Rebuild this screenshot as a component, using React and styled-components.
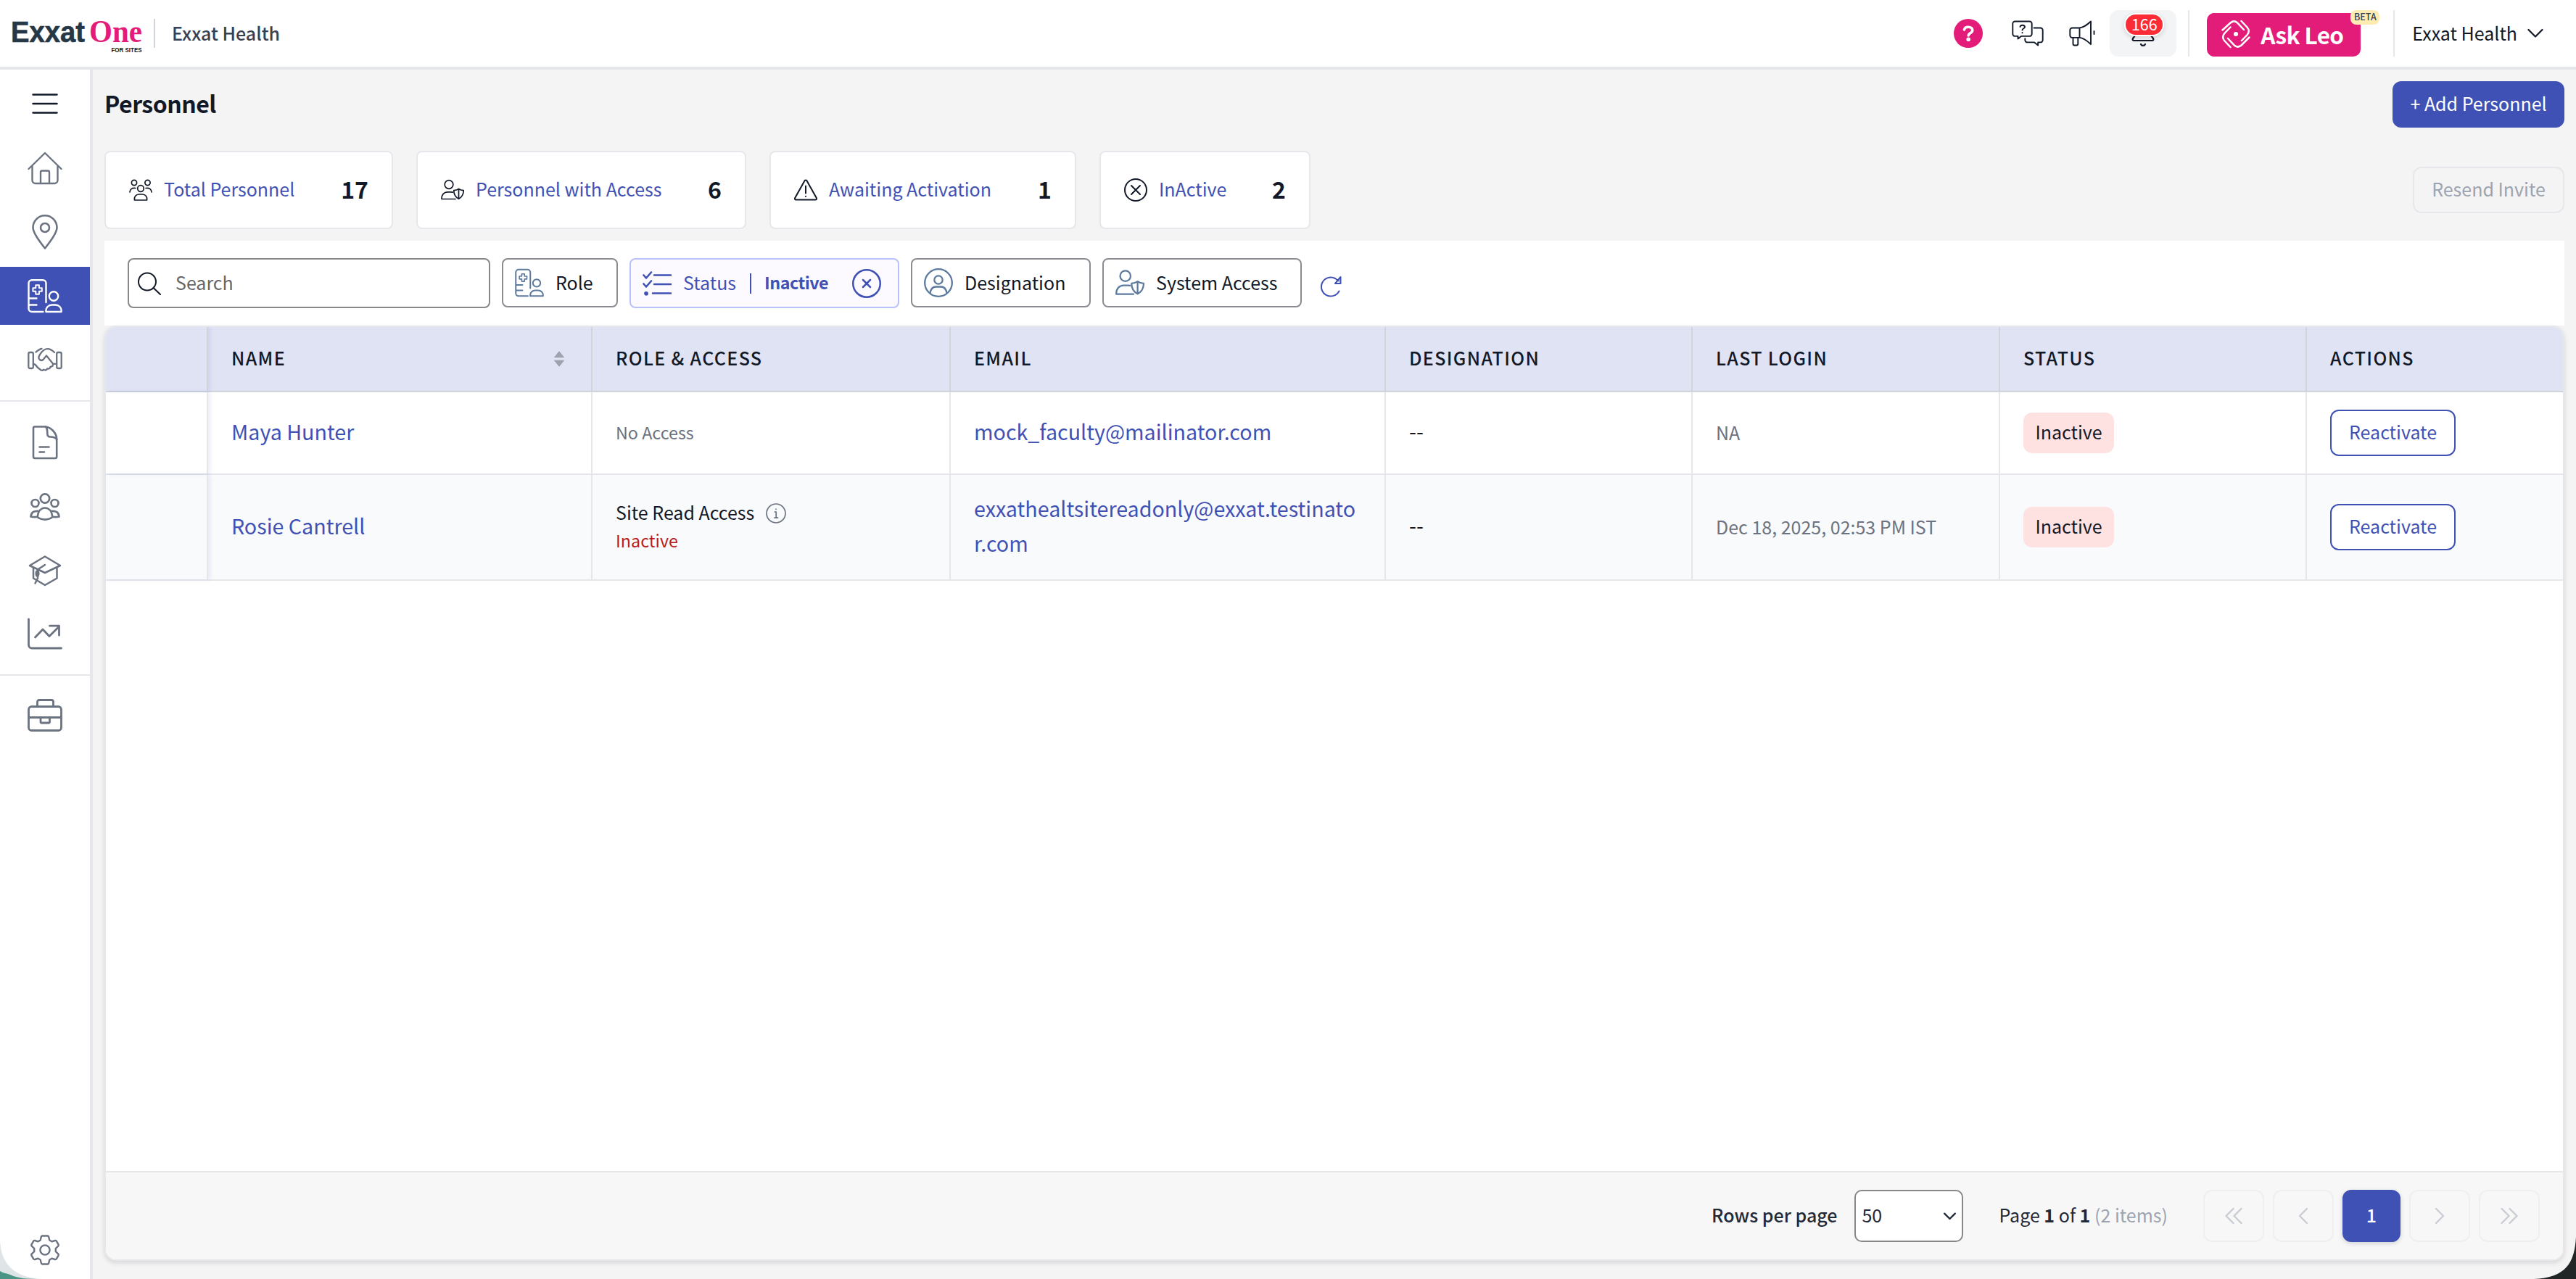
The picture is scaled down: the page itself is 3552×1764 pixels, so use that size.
import React from "react";
import styled, { createGlobalStyle } from "styled-components";

const GlobalStyle = createGlobalStyle`
  * {
    box-sizing: border-box;
  }

  body {
    margin: 0;
    font-family: "Noto Sans CJK JP", "Noto Sans", sans-serif;
    font-size: 25px;
    line-height: 1.4;
    color: #111827;
  }

  button {
    font: inherit;
    padding: 0;
    cursor: pointer;
  }

  svg {
    display: block;
    flex: none;
  }
`;

/* ---------- icons ---------- */

const Icon = ({ w, h, sw = 2.5, children, ...rest }) => (
  <svg
    width={w}
    height={h}
    viewBox={`0 0 ${w} ${h}`}
    fill="none"
    stroke="currentColor"
    strokeWidth={sw}
    strokeLinecap="round"
    strokeLinejoin="round"
    {...rest}
  >
    {children}
  </svg>
);

const MenuIcon = () => (
  <Icon w={36} h={30}>
    <path d="M1.5 2.5h33M1.5 15h33M1.5 27.500h33" />
  </Icon>
);

const HomeIcon = () => (
  <Icon w={48} h={48} sw={2.4}>
    <path d="M1.500 25L24 3l22.500 22M6.500 21v19.500a4.500 4.500 0 0 0 4.500 4.500h26a4.500 4.500 0 0 0 4.500-4.500V21M18 45V29.500a2 2 0 0 1 2-2h8a2 2 0 0 1 2 2V45" />
  </Icon>
);

const PinIcon = () => (
  <Icon w={48} h={48} sw={2.6}>
    <path d="M24 46.500C20 41 7.500 27 7.500 17.800a16.500 16.500 0 0 1 33 0C40.500 27 28 41 24 46.500z" />
    <circle cx="24" cy="18" r="6" />
  </Icon>
);

const StaffIcon = ({ size = 48, sw = 2.4 }) => (
  <Icon w={48} h={48} sw={sw} width={size} height={size}>
    <path d="M25.500 33V6.500A4.500 4.500 0 0 0 21 2.200H6A4.500 4.500 0 0 0 1.500 6.500v35A4.500 4.500 0 0 0 6 46h15.500M2 27.500h10.500M2 36.500h10.500" />
    <path
      strokeWidth="2"
      d="M11.300 9.300h4.600v3.900h3.900v4.600h-3.900v3.900h-4.600v-3.900H7.400v-4.600h3.900z"
    />
    <circle cx="36" cy="24.500" r="6.200" />
    <path d="M25.500 46c-1-6 4-9.500 8-9.500h5c4 0 9 3.500 8 9.500z" />
  </Icon>
);

const HandshakeIcon = () => (
  <Icon w={48} h={36} sw={2.3}>
    <rect x="1.300" y="8" width="6.500" height="22" rx="2" />
    <rect x="40.200" y="8" width="6.500" height="22" rx="2" />
    <path d="M8 24c3 0 4 2.500 6 5l3 2.200c1.800 2.200 4 2.300 5.200.4 2.300 1.600 4.300 1 5-1.200 2.600.6 4-.4 4.200-2.600 2.600 0 4-1.700 3.600-4H40M11.500 7.500c2.500-2 5-4.300 8-4.500M37 8c-4-4-8.500-5.500-12-4.500-3.500.8-8 6.500-9.500 10.500-.8 3.500 2.800 6.500 6 4l4.500-5.500L34.500 23" />
  </Icon>
);

const DocIcon = () => (
  <Icon w={48} h={48} sw={2.6}>
    <path d="M8 4.500A2 2 0 0 1 10 2.500h14.500C32 3 40 11 40.200 19.500V44a2 2 0 0 1-2 2H10a2 2 0 0 1-2-2z" />
    <path d="M24.500 2.500c2.500 1.500 2.800 4 2.800 9.500 0 3 1.200 4.500 4 4.500 4 0 7 .5 8.900 3.500M16.500 30.500h13M16.500 37.500h6.500" />
  </Icon>
);

const PeopleIcon = () => (
  <Icon w={48} h={48} sw={2.7}>
    <circle cx="24" cy="13.500" r="6.200" />
    <circle cx="10.500" cy="20" r="5" />
    <circle cx="37.500" cy="20" r="5" />
    <path d="M13.500 39c1-7.500 4.800-12.500 10.500-12.500s9.500 5 10.500 12.500c-6 4.700-15 4.700-21 0zM15.500 31c-6.500-.8-10.500 1.500-11 7.500 3 .8 6 1 9 .3M32.500 31c6.500-.8 10.500 1.500 11 7.500-3 .8-6 1-9 .3" />
  </Icon>
);

const GradIcon = () => (
  <Icon w={48} h={48} sw={2.5}>
    <path d="M24 5.500L45 18 24 28 3 18zM24 17l-10 6.500v12l-3.500 7M8 21.500v14L24 45l16.500-9.500V21" />
    <ellipse cx="13.500" cy="29" rx="1.800" ry="3.500" fill="currentColor" />
  </Icon>
);

const ChartIcon = () => (
  <Icon w={48} h={48} sw={2.8}>
    <path d="M1.500 4v35.500a4.500 4.500 0 0 0 4.500 4.500h40.500M10.500 29L21 18l9 9.500L43.500 14M30.500 13.200h13v13" />
  </Icon>
);

const BriefcaseIcon = () => (
  <Icon w={48} h={48} sw={2.8}>
    <rect x="1.500" y="10.500" width="45" height="33" rx="4" />
    <path d="M13.500 10.500V4A2.500 2.500 0 0 1 16 1.500h17A2.500 2.500 0 0 1 35.500 4v6.500M1.500 25.500h45M18 25.500v6a1.500 1.500 0 0 0 1.500 1.500h9.500a1.500 1.500 0 0 0 1.500-1.500v-6" />
  </Icon>
);

const GearIcon = () => (
  <Icon w={40} h={42} sw={2.4}>
    <path d="M16.500 1.500h7c1 0 1.500.5 1.700 1.400l1.100 4.600 3.200 1.800 4.200-1.300c1-.3 1.700 0 2.200.8l2.600 4.600c.4.800.3 1.500-.3 2.200l-3.400 3.200v4.400l3.400 3.200c.6.700.7 1.400.3 2.200l-2.600 4.600c-.5.800-1.200 1.100-2.200.8l-4.200-1.300-3.200 1.800-1.100 4.600c-.2.900-.7 1.400-1.700 1.400h-7c-1 0-1.500-.5-1.700-1.400l-1.100-4.600-3.200-1.800L6.300 34c-1 .3-1.700 0-2.200-.8l-2.600-4.600c-.4-.8-.3-1.500.3-2.200l3.400-3.200v-4.400l-3.400-3.200c-.6-.7-.7-1.400-.3-2.200l2.600-4.600c.5-.8 1.200-1.100 2.200-.8l4.200 1.300 3.200-1.800 1.100-4.600c.2-.9.700-1.400 1.700-1.400z" />
    <circle cx="20" cy="21" r="6.600" />
  </Icon>
);

const HelpIcon = () => (
  <Icon w={40} h={40} sw={3.6}>
    <circle cx="20" cy="20" r="20" fill="#e31c79" stroke="none" />
    <path d="M14.500 15c.5-3 2.800-3.800 5.500-3.800 3.500 0 5.800 1.800 5.800 4.600 0 4.200-5.600 3.700-5.600 7.200" stroke="#fff" />
    <circle cx="20.200" cy="28.300" r="1" stroke="#fff" fill="#fff" />
  </Icon>
);

const ChatIcon = () => (
  <Icon w={44} h={36} sw={1.9}>
    <path d="M4.500 1.500h20a3.200 3.200 0 0 1 3.200 3.200v14a3.200 3.200 0 0 1-3.200 3.200H13l-4.500 3.700v-3.700h-4a3.200 3.200 0 0 1-3.200-3.200v-14a3.200 3.200 0 0 1 3.200-3.200zM30.500 10.500h9a3.200 3.200 0 0 1 3.200 3.200v13.500a3.200 3.200 0 0 1-3.200 3.200h-3.300v4.100l-5-4.100H21.500a3.200 3.200 0 0 1-3.200-3.200v-2" />
    <path d="M11.500 9c0-3 6.500-3 6.500.3 0 2-3.500 2-3.500 4.200M14.500 17v.2" />
  </Icon>
);

const MegaphoneIcon = () => (
  <Icon w={36} h={36} sw={1.900}>
    <path d="M14.500 10.500H4.500a3.200 3.200 0 0 0-3.200 3.200v7a3.200 3.200 0 0 0 3.200 3.200h10c6 .5 10.500 4.500 15.500 9.100V1.500c-5 4.500-9.500 8.500-15.500 9zM14.500 10.500v13.400M5.500 24v8.500a2 2 0 0 0 2 2h2.800a2 2 0 0 0 2-2V24M34.500 15v4" />
  </Icon>
);

const BellIcon = () => (
  <Icon w={32} h={38} sw={2.2}>
    <path d="M16 2c-6 0-9.500 4.500-9.500 10v8L2 26c-1 1.800 0 3 1.500 3h25c1.500 0 2.500-1.200 1.500-3l-4.500-6v-8C25.500 6.500 22 2 16 2zM13 34c1 2.500 5 2.500 6 0" />
  </Icon>
);

const LeoIcon = () => (
  <Icon w={40} h={40} sw={2.500} stroke="#fff">
    <path d="M1.500 14.500L12.500 4.500c3.500-2.800 7-2.800 10 .4L31 14M27.500 2l8 8.500c3 3.500 3 7 .2 10.500L28 29M38.500 24.500L27.500 35.500c-3.500 2.800-7 2.800-10-.4L9 26M12.500 38l-8-8.500c-3-3.500-3-7-.2-10.500L12.500 10.500" />
    <circle cx="20" cy="20" r="1.800" fill="#fff" />
  </Icon>
);

const ChevronDown = ({ w = 22, h = 14, sw = 2.2 }) => (
  <Icon w={22} h={14} sw={sw} width={w} height={h}>
    <path d="M1.500 2L11 11.500 20.500 2" />
  </Icon>
);

const GroupIcon = () => (
  <Icon w={32} h={32} sw={1.700}>
    <circle cx="7" cy="6" r="3.600" />
    <circle cx="25.500" cy="6" r="3.600" />
    <circle cx="16" cy="14" r="4.300" />
    <path d="M1 19c.3-4 2.500-6 8-5.500M31 19c-.3-4-2.500-6-8-5.500M7.500 30c-.8-4.500 2-8 6-8h5c4 0 6.800 3.500 6 8z" />
  </Icon>
);

const UserShieldIcon = ({ size = 32, sw = 1.700 }) => (
  <Icon w={32} h={32} sw={sw} width={size} height={size}>
    <circle cx="11" cy="8.500" r="5.800" />
    <path d="M20 28.500H1c-.3-6 3.500-9.700 8-9.700h5c.8 0 1.500 0 2.200.3M24.500 14.500c2 1.500 4 2 6.700 2.200 0 5-2 9-6.700 11.600-4.700-2.600-6.700-6.600-6.700-11.600 2.700-.2 4.700-.7 6.700-2.200zM24.500 15v13" />
  </Icon>
);

const WarnIcon = () => (
  <Icon w={32} h={32} sw={2}>
    <path d="M14.500 3.300a1.700 1.700 0 0 1 3 0L30.800 27c.7 1.300 0 2.500-1.400 2.500H2.600c-1.400 0-2.100-1.200-1.400-2.500zM16 10.500v10M16 24.700v.2" />
  </Icon>
);

const CircleXIcon = ({ size = 32, sw = 2, arm = 6 }) => (
  <Icon w={32} h={32} sw={sw} width={size} height={size}>
    <circle cx="16" cy="16" r="15" />
    <path
      d={`M${16 - arm} ${16 - arm}l${arm * 2} ${arm * 2}M${16 + arm} ${16 - arm}l${-arm * 2} ${arm * 2}`}
    />
  </Icon>
);

const SearchIcon = () => (
  <Icon w={32} h={32} sw={2}>
    <circle cx="13" cy="13.500" r="12" />
    <path d="M22 22.500l9 8.500" />
  </Icon>
);

const ChecklistIcon = () => (
  <Icon w={40} h={36} sw={2.600}>
    <path d="M16 6.500h23M16 19h23M14 31.500h25M1.500 6.500l3.500 4L12 2.500M1.500 18.500l3.500 4 7-8" />
    <circle cx="5" cy="31.800" r="1.600" fill="currentColor" />
  </Icon>
);

const DesignationIcon = () => (
  <Icon w={40} h={40} sw={2.300}>
    <circle cx="20" cy="20" r="18.800" />
    <circle cx="20" cy="16" r="5.700" />
    <path d="M8.500 34c1-5.500 4-8.500 8-8.500h7c4 0 7 3 8 8.500" />
  </Icon>
);

const RefreshIcon = () => (
  <Icon w={32} h={32} sw={2}>
    <path d="M27.500 22.500A13 13 0 1 1 22 5l5 3.500M29.500 3v9H22z" />
  </Icon>
);

const InfoIcon = () => (
  <Icon w={28} h={28} sw={1.700}>
    <circle cx="14" cy="14" r="13" />
    <path d="M12.300 12h1.900v8M12 20.200h4.500M14 8v.3" />
  </Icon>
);

const PageArrow = ({ double, flip }) => (
  <Icon w={24} h={24} sw={2.400} transform={flip ? "scale(-1 1)" : undefined}>
    <path d={double ? "M1.500 2l10 10-10 10M12.500 2l10 10-10 10" : "M7 2l10 10L7 22"} />
  </Icon>
);

const SortIcon = () => (
  <svg width="16" height="22" viewBox="0 0 16 22" fill="#9ca3af">
    <path d="M8 .8l6.500 8h-13zM8 21.200l6.500-8h-13z" stroke="#9ca3af" strokeLinejoin="round" />
  </svg>
);

/* ---------- layout ---------- */

const Page = styled.div`
  width: 3552px;
  height: 1764px;
  display: flex;
  flex-direction: column;
  overflow: hidden;
  position: relative;
  background: #f4f4f4;
`;

const TopBar = styled.header`
  height: 96px;
  flex: none;
  display: flex;
  align-items: center;
  justify-content: space-between;
  background: #fff;
  border-bottom: 4px solid #e5e7eb;
`;

const TopSide = styled.div`
  display: flex;
  align-items: center;
`;

const TenantName = styled.span`
  margin-left: 23px;
  line-height: 36px;
  padding-bottom: 3px;
  font-weight: 500;
  color: #374151;
`;

const Divider = styled.i`
  width: 2px;
  height: ${(p) => p.$h}px;
  background: ${(p) => p.$color || "#e5e7eb"};
`;

const IconSlot = styled.button`
  border: 0;
  background: none;
  color: #111827;
  margin-right: ${(p) => p.$mr}px;
`;

const BellBox = styled.button`
  position: relative;
  width: 92px;
  height: 64px;
  margin-right: 16px;
  border: 0;
  border-radius: 12px;
  background: #f3f4f6;
  color: #111827;
  display: flex;
  align-items: center;
  justify-content: center;
`;

const BellCount = styled.span`
  position: absolute;
  left: 20px;
  top: 4px;
  width: 55px;
  height: 32px;
  border: 2px solid #fff;
  border-radius: 16px;
  background: #fb2c36;
  color: #fff;
  font-size: 21.5px;
  line-height: 25px;
  text-align: center;
  box-shadow: 0 2px 6px rgba(0, 0, 0, 0.15);
`;

const LeoButton = styled.button`
  position: relative;
  width: 212px;
  height: 60px;
  margin: 4px 45px 0 24px;
  border: 0;
  border-radius: 10px;
  background: #e31c79;
  color: #fff;
  display: flex;
  align-items: center;
  padding: 0 0 2px 20px;
  gap: 14px;
  font-size: 31.5px;
  font-weight: 600;
  letter-spacing: -0.6px;
  line-height: 44px;
`;

const BetaTag = styled.span`
  position: absolute;
  left: 198px;
  top: -4px;
  width: 40px;
  height: 20px;
  border-radius: 8px;
  background: #ffecb3;
  color: #374151;
  font-size: 12.5px;
  font-weight: 500;
  letter-spacing: 0;
  line-height: 18px;
  text-align: center;
`;

const AccountButton = styled.button`
  display: flex;
  align-items: center;
  gap: 14px;
  margin: 0 45px 0 24px;
  border: 0;
  background: none;
  color: #111827;
  line-height: 36px;

  span {
    padding-bottom: 3px;
  }
`;

const Body = styled.div`
  flex: 1;
  min-height: 0;
  display: flex;
`;

const Sidebar = styled.nav`
  width: 128px;
  flex: none;
  display: flex;
  flex-direction: column;
  background: #fff;
  border-right: 4px solid #e5e7eb;
`;

const NavItem = styled.a`
  height: 80px;
  margin-bottom: ${(p) => (p.$last ? 16 : 8)}px;
  flex: none;
  display: flex;
  align-items: center;
  justify-content: center;
  color: ${(p) => (p.$active ? "#fff" : "#6b7280")};
  background: ${(p) => (p.$active ? "#3f51b5" : "transparent")};
`;

const MenuToggle = styled(NavItem)`
  height: 93px;
  margin-bottom: 3px;
  color: #111827;
`;

const SettingsItem = styled(NavItem)`
  height: 64px;
`;

const NavDivider = styled.div`
  height: 2px;
  margin-bottom: 16px;
  flex: none;
  background: #e5e7eb;
`;

const NavSpacer = styled.div`
  flex: 1;
`;

const Main = styled.main`
  flex: 1;
  min-width: 0;
  padding: 16px 16px 25px;
  display: flex;
  flex-direction: column;
`;

const TitleRow = styled.div`
  height: 64px;
  display: flex;
  align-items: center;
  justify-content: space-between;
`;

const Title = styled.h1`
  margin: 0;
  padding-bottom: 5px;
  font-size: 32px;
  font-weight: 600;
  letter-spacing: -0.5px;
  line-height: 44px;
`;

const PrimaryButton = styled.button`
  width: 237px;
  height: 64px;
  border: 0;
  border-radius: 12px;
  padding-bottom: 3px;
  background: #3f51b5;
  color: #fff;
`;

const StatsRow = styled.div`
  margin-top: 32px;
  height: 108px;
  display: flex;
  align-items: center;
  gap: 32px;
`;

const StatCard = styled.div`
  width: ${(p) => p.$w}px;
  height: 108px;
  padding: 0 32px;
  border: 2px solid #e5e7eb;
  border-radius: 8px;
  background: #fff;
  display: flex;
  align-items: center;
`;

const StatLabel = styled.a`
  margin-left: 16px;
  padding-bottom: 4px;
  line-height: 36px;
  color: #3f51b5;
  white-space: nowrap;
`;

const StatValue = styled.span`
  margin-left: auto;
  padding-bottom: 5px;
  font-size: 32px;
  font-weight: 600;
  line-height: 44px;
`;

const ResendButton = styled.button`
  width: 209px;
  height: 64px;
  margin-left: auto;
  padding-bottom: 3px;
  border: 2px solid #e5e7eb;
  border-radius: 12px;
  background: transparent;
  color: #9ca3af;
`;

const FilterBar = styled.div`
  margin-top: 16px;
  height: 117px;
  padding: 24px 32px 0;
  flex: none;
  background: #fff;
  display: flex;
  align-items: flex-start;
  gap: 16px;
`;

const SearchBox = styled.label`
  width: 500px;
  height: 69px;
  padding-left: 12px;
  border: 2px solid #888;
  border-radius: 8px;
  display: flex;
  align-items: center;
  gap: 20px;
  color: #111827;

  input {
    flex: 1;
    min-width: 0;
    height: 40px;
    padding: 0 0 3px;
    border: 0;
    outline: 0;
    background: none;
    font: inherit;
  }

  input::placeholder {
    color: #666;
    opacity: 1;
  }
`;

const FilterButton = styled.button`
  width: ${(p) => p.$w}px;
  height: 68px;
  padding-left: 16px;
  border: 2px solid #8b8b91;
  border-radius: 8px;
  background: #fff;
  color: #5c7a9e;
  display: flex;
  align-items: center;
  gap: 16px;

  span {
    padding-bottom: 3px;
    line-height: 36px;
    color: #111827;
  }
`;

const ActiveFilter = styled.div`
  width: 372px;
  height: 69px;
  padding-left: 16px;
  border: 2px solid #b9c1fb;
  border-radius: 8px;
  background: #fdfaff;
  color: #3f51b5;
  display: flex;
  align-items: center;

  span,
  b {
    padding-bottom: 3px;
    line-height: 36px;
  }

  span {
    margin: 0 19px 0 16px;
  }

  b {
    width: 88px;
    margin: 0 33px 0 18px;
    font-size: 23.3px;
    font-weight: 600;
    letter-spacing: -0.5px;
  }
`;

const RefreshButton = styled.button`
  margin: 23px 0 0 8px;
  border: 0;
  background: none;
  color: #3f51b5;
`;

const TableCard = styled.section`
  flex: 1;
  display: flex;
  flex-direction: column;
  overflow: hidden;
  border: 2px solid #e5e7eb;
  border-radius: 16px;
  background: #fff;
  box-shadow: 0 3px 6px rgba(0, 0, 0, 0.12);
`;

const Row = styled.div`
  display: grid;
  grid-template-columns: 141px 530px 494px 600px 423px 424px 423px 1fr;
  height: ${(p) => p.$h}px;
  flex: none;
  background: ${(p) => p.$bg || "#fff"};
  border-bottom: 2px solid ${(p) => p.$line || "#e5e7eb"};
`;

const Cell = styled.div`
  padding: 0 32px;
  min-width: 0;
  display: flex;
  align-items: center;
  border-right: 2px solid ${(p) => p.$line || "#e5e7eb"};

  &:first-child {
    position: relative;
    box-shadow: 3px 0 5px rgba(63, 81, 220, 0.1);
  }

  &:last-child {
    border-right: 0;
  }
`;

const HeadCell = styled(Cell)`
  justify-content: space-between;
  padding-right: 36px;
  font-weight: 500;
  letter-spacing: 1.35px;
  text-transform: uppercase;

  span {
    padding-bottom: 3px;
  }
`;

const Link = styled.a`
  padding-bottom: 4px;
  font-size: 28.65px;
  line-height: 48px;
  color: #3f51b5;
  word-break: break-all;
`;

const Muted = styled.span`
  padding-bottom: ${(p) => (p.$small ? 2 : 1)}px;
  font-size: ${(p) => (p.$small ? 23.3 : 25)}px;
  color: #6b7280;
`;

const PlainValue = styled.span`
  padding-bottom: 5px;
  font-size: 28.65px;
`;

const AccessStack = styled.div`
  display: flex;
  flex-direction: column;
`;

const AccessLine = styled.div`
  display: flex;
  align-items: center;
  gap: 16px;
  line-height: 40px;
  color: #6b7280;

  span {
    padding-bottom: 3px;
    color: #111827;
  }
`;

const AccessState = styled.div`
  font-size: 23.3px;
  line-height: 32px;
  padding-bottom: 7px;
  color: #b91c1c;
`;

const Badge = styled.span`
  width: 125px;
  height: 56px;
  padding-bottom: 3px;
  border-radius: 12px;
  background: #fee2e2;
  display: flex;
  align-items: center;
  justify-content: center;
`;

const OutlineButton = styled.button`
  width: 173px;
  height: 64px;
  padding-bottom: 3px;
  border: 2px solid #3f51b5;
  border-radius: 12px;
  background: #fff;
  color: #3f51b5;
`;

const TableFill = styled.div`
  flex: 1;
`;

const Footer = styled.footer`
  height: 122px;
  flex: none;
  padding-right: 32px;
  border-top: 2px solid #e5e7eb;
  background: #f7f7f7;
  display: flex;
  align-items: center;
  justify-content: flex-end;
  gap: 12px;
  color: #1f2937;
`;

const FooterText = styled.span`
  margin-right: ${(p) => p.$mr}px;
  padding-bottom: 3px;
  white-space: pre;
  font-weight: ${(p) => (p.$medium ? 500 : 400)};

  b {
    font-weight: 600;
  }

  em {
    font-style: normal;
    color: #9ca3af;
  }
`;

const PageSize = styled.div`
  width: 150px;
  height: 72px;
  margin-right: 37px;
  padding: 0 8px;
  border: 2px solid #888;
  border-radius: 10px;
  background: #fff;
  display: flex;
  align-items: center;
  justify-content: space-between;

  span {
    padding-bottom: 3px;
  }
`;

const PagerButton = styled.button`
  width: ${(p) => (p.$active ? 80 : 84)}px;
  height: 72px;
  border: ${(p) => (p.$active ? "0" : "2px solid #efefef")};
  border-radius: 12px;
  background: ${(p) => (p.$active ? "#3f51b5" : "transparent")};
  color: ${(p) => (p.$active ? "#fff" : "#c9ccd2")};
  box-shadow: ${(p) => (p.$active ? "0 2px 6px rgba(0, 0, 0, 0.15)" : "none")};
  display: flex;
  align-items: center;
  justify-content: center;
  font-weight: 500;

  span {
    padding-bottom: 3px;
  }
`;

const Corner = styled.svg`
  position: absolute;
  bottom: 0;
  left: ${(p) => (p.$right ? "auto" : 0)};
  right: ${(p) => (p.$right ? 0 : "auto")};
`;

/* ---------- data ---------- */

const stats = [
  { label: "Total Personnel", value: 17, w: 398, icon: <GroupIcon /> },
  { label: "Personnel with Access", value: 6, w: 455, icon: <UserShieldIcon /> },
  { label: "Awaiting Activation", value: 1, w: 423, icon: <WarnIcon /> },
  { label: "InActive", value: 2, w: 291, icon: <CircleXIcon /> },
];

const columns = [
  "",
  "Name",
  "Role & Access",
  "Email",
  "Designation",
  "Last Login",
  "Status",
  "Actions",
];

const people = [
  {
    name: "Maya Hunter",
    access: null,
    email: "mock_faculty@mailinator.com",
    designation: "--",
    lastLogin: "NA",
    height: 114,
  },
  {
    name: "Rosie Cantrell",
    access: "Site Read Access",
    email: "exxathealtsitereadonly@exxat.testinator.com",
    designation: "--",
    lastLogin: "Dec 18, 2025, 02:53 PM IST",
    height: 146,
  },
];

/* ---------- components ---------- */

const Logo = () => (
  <svg width="212" height="60" viewBox="0 0 212 60">
    <text
      x="15"
      y="42"
      fontFamily="Liberation Sans, sans-serif"
      fontWeight="700"
      fontSize="40"
      fill="#263746"
      stroke="#263746"
      strokeWidth="0.6"
      textLength="102"
      lengthAdjust="spacingAndGlyphs"
    >
      Exxat
    </text>
    <text
      x="123"
      y="42"
      fontFamily="Liberation Serif, serif"
      fontWeight="700"
      fontSize="44"
      fill="#e31c79"
      textLength="73"
      lengthAdjust="spacingAndGlyphs"
    >
      One
    </text>
    <text
      x="153.500"
      y="56"
      fontFamily="Liberation Sans, sans-serif"
      fontWeight="700"
      fontSize="8.800"
      fill="#111"
      textLength="42"
      lengthAdjust="spacingAndGlyphs"
    >
      FOR SITES
    </text>
  </svg>
);

const Header = () => (
  <TopBar>
    <TopSide>
      <Logo />
      <Divider $h={40} $color="#d1d5db" />
      <TenantName>Exxat Health</TenantName>
    </TopSide>
    <TopSide>
      <IconSlot $mr={40}>
        <HelpIcon />
      </IconSlot>
      <IconSlot $mr={35}>
        <ChatIcon />
      </IconSlot>
      <IconSlot $mr={20}>
        <MegaphoneIcon />
      </IconSlot>
      <BellBox>
        <BellIcon />
        <BellCount>166</BellCount>
      </BellBox>
      <Divider $h={64} />
      <LeoButton>
        <LeoIcon />
        Ask Leo
        <BetaTag>BETA</BetaTag>
      </LeoButton>
      <Divider $h={64} />
      <AccountButton>
        <span>Exxat Health</span>
        <ChevronDown />
      </AccountButton>
    </TopSide>
  </TopBar>
);

const SideNav = () => (
  <Sidebar>
    <MenuToggle>
      <MenuIcon />
    </MenuToggle>
    <NavItem>
      <HomeIcon />
    </NavItem>
    <NavItem>
      <PinIcon />
    </NavItem>
    <NavItem $active>
      <StaffIcon />
    </NavItem>
    <NavItem $last>
      <HandshakeIcon />
    </NavItem>
    <NavDivider />
    <NavItem>
      <DocIcon />
    </NavItem>
    <NavItem>
      <PeopleIcon />
    </NavItem>
    <NavItem>
      <GradIcon />
    </NavItem>
    <NavItem $last>
      <ChartIcon />
    </NavItem>
    <NavDivider />
    <NavItem>
      <BriefcaseIcon />
    </NavItem>
    <NavSpacer />
    <SettingsItem>
      <GearIcon />
    </SettingsItem>
  </Sidebar>
);

const Filters = () => (
  <FilterBar>
    <SearchBox>
      <SearchIcon />
      <input placeholder="Search" />
    </SearchBox>
    <FilterButton $w={160}>
      <StaffIcon size={40} />
      <span>Role</span>
    </FilterButton>
    <ActiveFilter>
      <ChecklistIcon />
      <span>Status</span>
      <Divider $h={28} $color="#3f51b5" />
      <b>Inactive</b>
      <CircleXIcon size={40} arm={4} />
    </ActiveFilter>
    <FilterButton $w={248}>
      <DesignationIcon />
      <span>Designation</span>
    </FilterButton>
    <FilterButton $w={275}>
      <UserShieldIcon size={40} sw={1.8} />
      <span>System Access</span>
    </FilterButton>
    <RefreshButton>
      <RefreshIcon />
    </RefreshButton>
  </FilterBar>
);

const PersonRow = ({ person, striped }) => (
  <Row $h={person.height} $bg={striped ? "#f9fafc" : "#fff"}>
    <Cell />
    <Cell>
      <Link>{person.name}</Link>
    </Cell>
    <Cell>
      {person.access ? (
        <AccessStack>
          <AccessLine>
            <span>{person.access}</span>
            <InfoIcon />
          </AccessLine>
          <AccessState>Inactive</AccessState>
        </AccessStack>
      ) : (
        <Muted $small>No Access</Muted>
      )}
    </Cell>
    <Cell>
      <Link>{person.email}</Link>
    </Cell>
    <Cell>
      <PlainValue>{person.designation}</PlainValue>
    </Cell>
    <Cell>
      <Muted>{person.lastLogin}</Muted>
    </Cell>
    <Cell>
      <Badge>Inactive</Badge>
    </Cell>
    <Cell>
      <OutlineButton>Reactivate</OutlineButton>
    </Cell>
  </Row>
);

const Pagination = () => (
  <Footer>
    <FooterText $mr={12} $medium>
      Rows per page
    </FooterText>
    <PageSize>
      <span>50</span>
      <ChevronDown w={17} h={11} sw={3} />
    </PageSize>
    <FooterText $mr={37}>
      Page <b>1</b> of <b>1</b> <em>(2 items)</em>
    </FooterText>
    <PagerButton>
      <PageArrow double flip />
    </PagerButton>
    <PagerButton>
      <PageArrow flip />
    </PagerButton>
    <PagerButton $active>
      <span>1</span>
    </PagerButton>
    <PagerButton>
      <PageArrow />
    </PagerButton>
    <PagerButton>
      <PageArrow double />
    </PagerButton>
  </Footer>
);

const App = () => {
  return (
    <>
      <GlobalStyle />
      <Page>
        <Header />
        <Body>
          <SideNav />
          <Main>
            <TitleRow>
              <Title>Personnel</Title>
              <PrimaryButton>+ Add Personnel</PrimaryButton>
            </TitleRow>
            <StatsRow>
              {stats.map((stat) => (
                <StatCard key={stat.label} $w={stat.w}>
                  {stat.icon}
                  <StatLabel>{stat.label}</StatLabel>
                  <StatValue>{stat.value}</StatValue>
                </StatCard>
              ))}
              <ResendButton>Resend Invite</ResendButton>
            </StatsRow>
            <Filters />
            <TableCard>
              <Row $h={90} $bg="#e0e3f4" $line="#d1d5db">
                {columns.map((name) => (
                  <HeadCell key={name} $line="#d1d5db">
                    <span>{name}</span>
                    {name === "Name" && <SortIcon />}
                  </HeadCell>
                ))}
              </Row>
              {people.map((person, i) => (
                <PersonRow key={person.name} person={person} striped={i % 2 === 1} />
              ))}
              <TableFill />
              <Pagination />
            </TableCard>
          </Main>
        </Body>
        <Corner width="60" height="60" viewBox="0 0 60 60">
          <path d="M0 6C1 38 18 58 58 60H0z" fill="#dfe4e6" />
          <path d="M0 49c6 4 10 3 14 5 10 5 22 6 44 6H0z" fill="#4a9585" />
        </Corner>
        <Corner $right width="60" height="60" viewBox="0 0 60 60">
          <path d="M60 2C58 38 46 58 2 60h58z" fill="#1f2625" />
        </Corner>
      </Page>
    </>
  );
};

export default App;
